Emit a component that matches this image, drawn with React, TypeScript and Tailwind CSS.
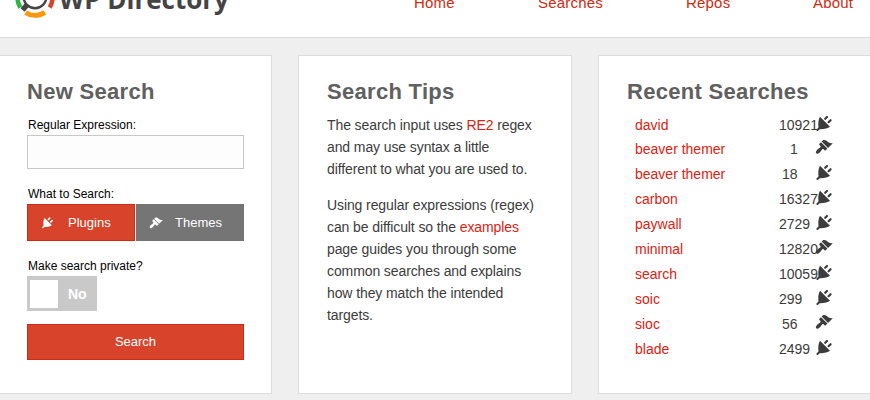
type Kind = "plugin" | "theme";

const navItems = [
  { label: "Home", className: "w-[124px]" },
  { label: "Searches", className: "w-[148px]" },
  { label: "Repos", className: "w-[127px]" },
  { label: "About", className: "" },
];

const recent: { term: string; matches: string; kind: Kind; indent: string }[] = [
  { term: "david", matches: "10921", kind: "plugin", indent: "pl-0" },
  { term: "beaver themer", matches: "1", kind: "theme", indent: "pl-[11px]" },
  { term: "beaver themer", matches: "18", kind: "plugin", indent: "pl-[3px]" },
  { term: "carbon", matches: "16327", kind: "plugin", indent: "pl-0" },
  { term: "paywall", matches: "2729", kind: "plugin", indent: "pl-0" },
  { term: "minimal", matches: "12820", kind: "theme", indent: "pl-0" },
  { term: "search", matches: "10059", kind: "plugin", indent: "pl-0" },
  { term: "soic", matches: "299", kind: "plugin", indent: "pl-0" },
  { term: "sioc", matches: "56", kind: "theme", indent: "pl-[3px]" },
  { term: "blade", matches: "2499", kind: "plugin", indent: "pl-0" },
];

function KindIcon({ kind, className }: { kind: Kind; className: string }) {
  if (kind === "plugin") {
    return (
      <svg viewBox="-1 -1 18 18" fill="none" stroke="currentColor" strokeLinecap="round" className={className}>
        <path
          d="M4 1.8L14 11.8C12 13.5 8 14.4 2.8 14.2C1.8 9 2.2 4.8 4 1.8z"
          fill="currentColor"
          stroke="none"
        />
        <path d="M3 13.4L1.4 15" strokeWidth="2" />
        <path d="M9.2 3.8L11 2M12.6 7.2L14.6 5.2" strokeWidth="2.2" />
      </svg>
    );
  }
  return (
    <svg viewBox="0 0 20 20" fill="currentColor" className={className}>
      <path d="M14.48 11.06L7.41 3.99l1.5-1.5c.5-.56 2.3-.47 3.51.32 1.21.8 1.43 1.28 2.91 2.1 1.18.64 2.45 1.26 4.45.85zm-.71.71L6.7 4.7 4.93 6.47c-.39.39-.39 1.02 0 1.41l1.06 1.06c.39.39.39 1.03 0 1.42-.6.6-1.43 1.11-2.21 1.69-.35.26-.7.53-1.01.84C1.43 14.23.4 16.08 1.4 17.07c.99 1 2.84-.03 4.18-1.36.31-.31.58-.66.85-1.02.57-.78 1.08-1.61 1.69-2.21.39-.39 1.02-.39 1.41 0l1.06 1.06c.39.39 1.02.39 1.41 0z" />
    </svg>
  );
}

function LogoMark() {
  return (
    <svg viewBox="0 0 40 40" fill="none" className="h-10 w-10 shrink-0">
      <path d="M5.3 29.5A17.5 17.5 0 0 1 18 3" stroke="#2fb344" strokeWidth="4.5" />
      <path d="M22 3A17.5 17.5 0 0 1 34.7 29.5" stroke="#d9432b" strokeWidth="4.5" />
      <path d="M10.6 34.6A17.5 17.5 0 0 0 29.8 34.4" stroke="#f8980c" strokeWidth="5" />
      <circle cx="20" cy="18.8" r="11.4" stroke="#444" strokeWidth="2.4" />
      <path d="M12 27L7.5 32" stroke="#444" strokeWidth="5.4" />
    </svg>
  );
}

function Card({ title, children }: { title: string; children: React.ReactNode }) {
  return (
    <section className="h-[339px] w-[274px] shrink-0 border border-[#dcdcdc] bg-white px-7 pt-[22px]">
      <h2 className="text-[22px] leading-7 font-bold tracking-[0.3px] text-[#606060]">{title}</h2>
      {children}
    </section>
  );
}

export default function App() {
  return (
    <div className="h-[400px] w-full overflow-hidden bg-[#efefef] font-['Liberation_Sans',Arial,sans-serif] text-[#3c3c3c]">
      <header className="flex h-[38px] border-b border-[#dcdcdc] bg-white">
        <div className="-mt-[22px] flex w-[414px] pl-[15px]">
          <LogoMark />
          <span className="pt-[3px] pl-1 font-['Open_Sans',sans-serif] text-[26px] leading-9 font-bold whitespace-nowrap text-[#444]">
            WP Directory
          </span>
        </div>
        <nav className="-mt-[7px] flex text-[15px] leading-5 tracking-[0.2px] text-[#d02a12]">
          {navItems.map((item) => (
            <a key={item.label} href="#" className={item.className}>
              {item.label}
            </a>
          ))}
        </nav>
      </header>

      <main className="mt-[17px] -ml-[2px] flex w-[874px] gap-[26px]">
        <Card title="New Search">
          <form className="flex flex-col text-[12px] text-black">
            <label className="mt-[11px] pl-px leading-4">Regular Expression:</label>
            <input className="mt-[2px] h-[34px] w-[217px] border border-[#c8c8c8] bg-[#fdfdfd]" />
            <label className="mt-[17px] pl-px leading-4">What to Search:</label>
            <div className="mt-[2px] flex h-[37px] w-[217px] gap-px text-[13px] text-white">
              <button type="button" className="flex w-[108px] items-center border border-[#d02a12] bg-[#d7432b] pl-[13px]">
                <KindIcon kind="plugin" className="h-[13px] w-[13px]" />
                <span className="pl-[14px]">Plugins</span>
              </button>
              <button type="button" className="flex w-[108px] items-center bg-[#757575] pl-[13px]">
                <KindIcon kind="theme" className="h-[14px] w-[14px]" />
                <span className="pl-[12px]">Themes</span>
              </button>
            </div>
            <label className="mt-[17px] pl-px leading-4">Make search private?</label>
            <div className="mt-[2px] flex h-[35px] w-[70px] items-center bg-[#c9c9c9] pl-[3px]">
              <span className="h-7 w-7 bg-white" />
              <span className="pt-px pl-[10px] text-[14px] font-bold text-white">No</span>
            </div>
            <button type="button" className="mt-[13px] h-[36px] w-[217px] border border-[#d02a12] bg-[#d7432b] text-[13px] text-white">
              Search
            </button>
          </form>
        </Card>

        <Card title="Search Tips">
          <div className="mt-2 text-[14px] leading-[22px] tracking-[-0.1px] whitespace-nowrap">
            <p>
              The search input uses <a href="#" className="text-[#dd2211]">RE2</a> regex
              <br />
              and may use syntax a little
              <br />
              different to what you are used to.
            </p>
            <p className="mt-[14px]">
              Using regular expressions (regex)
              <br />
              can be difficult so the <a href="#" className="text-[#dd2211]">examples</a>
              <br />
              page guides you through some
              <br />
              common searches and explains
              <br />
              how they match the intended
              <br />
              targets.
            </p>
          </div>
        </Card>

        <Card title="Recent Searches">
          <ul className="mt-[6.5px] pl-2 text-[14px] leading-[24.9px]">
            {recent.map((row, i) => (
              <li key={i} className="flex h-[24.9px] w-[220px]">
                <a href="#" className="w-[144px] shrink-0 text-[#dd2211]">
                  {row.term}
                </a>
                <span className={`w-[37px] shrink-0 ${row.indent}`}>{row.matches}</span>
                <KindIcon kind={row.kind} className="-ml-px mt-[1px] h-[18px] w-[18px] shrink-0" />
              </li>
            ))}
          </ul>
        </Card>
      </main>
    </div>
  );
}
